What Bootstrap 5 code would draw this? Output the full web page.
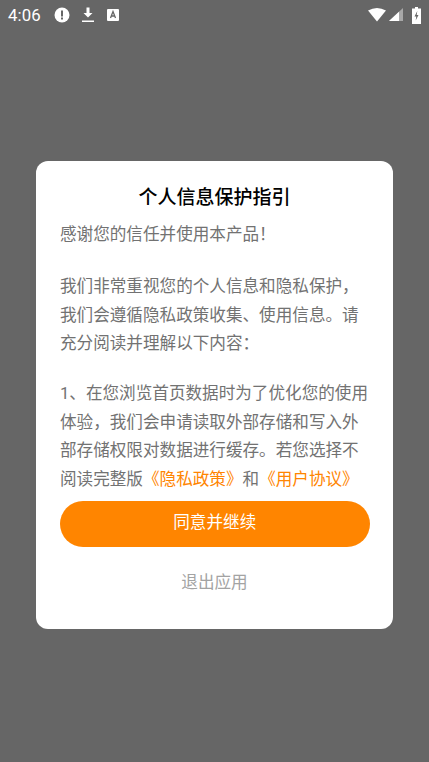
<!DOCTYPE html>
<html lang="zh-CN">
<head>
<meta charset="utf-8">
<meta name="viewport" content="width=device-width, initial-scale=1">
<link href="https://cdn.jsdelivr.net/npm/bootstrap@5.3.0/dist/css/bootstrap.min.css" rel="stylesheet">
<style>
html,body{height:762px;overflow:hidden}
body{background:#666;font-family:"Roboto","Noto Sans CJK SC",sans-serif;color:#666}
.status-strip{height:30px;padding:0 8px;color:#fff}
.clock{font-size:16.8px;line-height:30px;width:32px;letter-spacing:.1px;margin-right:14px}
.status-left{gap:11px}
.status-left .clock{margin-right:3px}
.sig{margin-left:3px;margin-right:9px}
.shell{height:732px;padding:131px 36px 0}
.sheet{width:357px;height:468px;border-radius:12px;padding:23px 24px 0;background:#fff}
.sheet-title{font-size:19px;line-height:27px;font-weight:500;color:#000;margin:0 0 10px}
.para{font-size:16.6px;line-height:28.6px;margin:0 -4px 23.4px 0;color:#727272}
.para.mid{margin-bottom:21.4px}
.para.last{margin-bottom:6px;white-space:nowrap}
.orange-link{color:#ff8500;text-decoration:none}
.btn-agree{height:46px;width:309.5px;background:#ff8500;border:0;color:#fff;font-size:16.6px;padding:0;border-radius:23px;display:block}
.btn-agree:hover{background:#ff8500;color:#fff}
.exit-link{height:72px;line-height:72px;font-size:16.6px;color:#a3a3a3;text-align:center}
</style>
</head>
<body>
<div class="status-strip d-flex align-items-center justify-content-between">
  <div class="d-flex align-items-center status-left">
    <span class="clock">4:06</span>
    <svg width="16" height="16" viewBox="0 0 16 16"><circle cx="8" cy="8" r="7.500" fill="#fff"/><rect x="7" y="3.500" width="2" height="6" fill="#666"/><rect x="7" y="10.500" width="2" height="2" fill="#666"/></svg>
    <svg width="14" height="16" viewBox="0 0 14 16"><path d="M5.500 .5h3v5.500h3L7 10.500 2.500 6h3z" fill="#fff"/><rect x="1" y="13.500" width="12" height="1.500" fill="#fff"/></svg>
    <svg width="14" height="14" viewBox="0 0 14 14"><rect x="1" y="1" width="12" height="12" rx="1" fill="#fff"/><path d="M4.500 10 7 3.500 9.500 10M5.400 8h3.200" fill="none" stroke="#666" stroke-width="1.300"/></svg>
  </div>
  <div class="d-flex align-items-center">
    <svg width="18" height="14" viewBox="0 0 18 14"><path d="M0 2.500Q9-2.500 18 2.500L9 13.500z" fill="#fff"/></svg>
    <svg class="sig" width="14" height="14" viewBox="0 0 14 14"><path d="M0 13 14 0v13z" fill="#a8a8a8"/><path d="M0 13 10 3.700V13z" fill="#fff"/></svg>
    <svg width="9" height="17" viewBox="0 0 9 17"><path d="M3 0h3v1.500h3V17H0V1.500h3z" fill="#fff"/><path d="M5.300 4 2.500 9.500h1.800l-.6 4 2.800-5.500H4.700z" fill="#666"/></svg>
  </div>
</div>
<div class="shell">
  <div class="sheet">
    <h1 class="sheet-title text-center">个人信息保护指引</h1>
    <p class="para">感谢您的信任并使用本产品！</p>
    <p class="para mid">我们非常重视您的个人信息和隐私保护，我们会遵循隐私政策收集、使用信息。请充分阅读并理解以下内容：</p>
    <p class="para last">1、在您浏览首页数据时为了优化您的使用<br>体验，我们会申请读取外部存储和写入外<br>部存储权限对数据进行缓存。若您选择不<br>阅读完整版<a class="orange-link" href="#">《隐私政策》</a>和<a class="orange-link" href="#">《用户协议》</a></p>
    <button type="button" class="btn btn-agree">同意并继续</button>
    <div class="exit-link">退出应用</div>
  </div>
</div>
<script src="https://cdn.jsdelivr.net/npm/bootstrap@5.3.0/dist/js/bootstrap.bundle.min.js"></script>
</body>
</html>
